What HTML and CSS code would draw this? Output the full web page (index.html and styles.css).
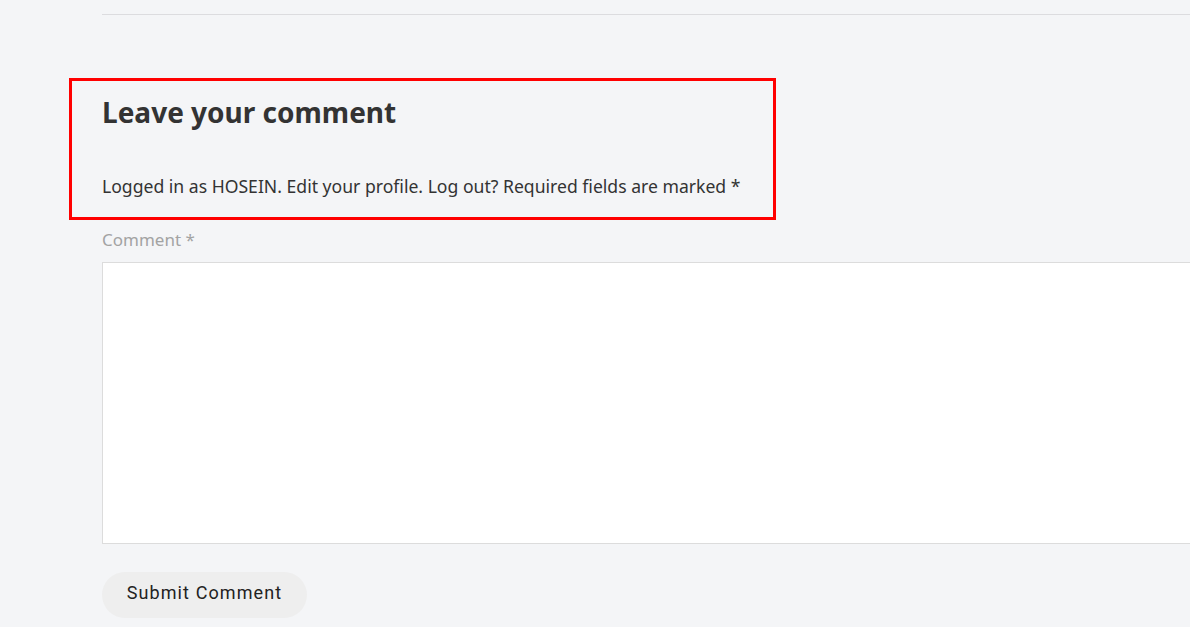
FILE: index.html
```html
<!DOCTYPE html>
<html lang="en">
<head>
<meta charset="utf-8">
<title>Leave your comment</title>
<link rel="stylesheet" href="styles.css">
</head>
<body>
<div class="page">
  <hr class="divider">
  <section class="respond">
    <div class="highlight">
      <h3 class="title">Leave your comment</h3>
      <p class="logged">Logged in as HOSEIN. Edit your profile. Log out? Required fields are marked *</p>
    </div>
    <form class="form">
      <label class="label" for="comment">Comment *</label>
      <textarea id="comment" class="textarea"></textarea>
      <button type="button" class="submit">Submit Comment</button>
    </form>
  </section>
</div>
</body>
</html>
```
FILE: styles.css
```css
html, body {
  margin: 0;
  padding: 0;
  background: #f4f5f7;
}
body {
  font-family: "Noto Sans", "Open Sans", sans-serif;
  color: #333;
  overflow: hidden;
}
.page {
  padding: 14px 0 0 102px;
  overflow: hidden;
}
.divider {
  border: 0;
  border-top: 1px solid #dcdcdf;
  margin: 0;
}
.respond {
  margin-top: 63px;
}
.highlight {
  margin-left: -33px;
  width: 641px;
  border: 3px solid #ff0000;
  padding: 11px 30px 18px 30px;
}
.title {
  margin: 0;
  font-size: 28px;
  font-weight: 700;
  line-height: 40px;
  color: #333;
}
.logged {
  margin: 41px 0 0;
  font-size: 17.6px;
  line-height: 26px;
  color: #333;
}
.form {
  display: flex;
  flex-direction: column;
  align-items: flex-start;
}
.label {
  margin-top: 7px;
  font-size: 17px;
  line-height: 26px;
  color: #a3a3a3;
}
.textarea {
  margin-top: 9px;
  box-sizing: border-box;
  width: calc(100% + 20px);
  height: 282px;
  border: 1px solid #dcdcdc;
  background: #fff;
  resize: none;
  padding: 10px;
}
.submit {
  margin-top: 28px;
  height: 46px;
  width: 205px;
  padding: 0 0 5px;
  border: 0;
  border-radius: 23px;
  background: #eeeeee;
  font-family: "Roboto", "Liberation Sans", sans-serif;
  font-size: 18px;
  letter-spacing: 1.1px;
  color: #222;
}
```
